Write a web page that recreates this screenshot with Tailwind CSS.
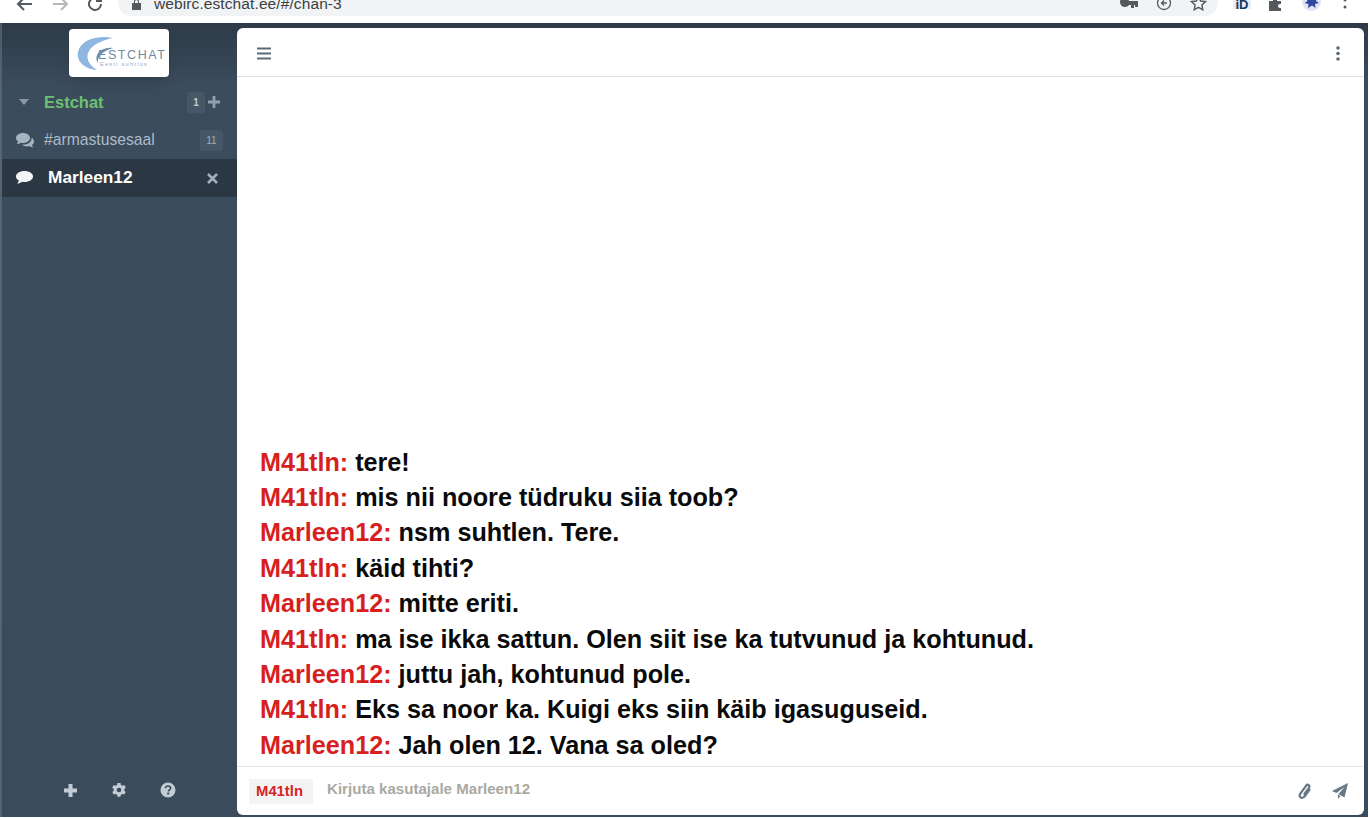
<!DOCTYPE html>
<html lang="et">
<head>
<meta charset="utf-8">
<title>Estchat</title>
<script src="https://cdn.jsdelivr.net/npm/@tailwindcss/browser@4"></script>
</head>
<body class="w-[1370px] h-[820px] overflow-hidden bg-white font-['Liberation_Sans',Arial,sans-serif]">
<div class="flex flex-col h-[820px]">
  <!-- browser chrome -->
  <header class="h-[23px] shrink-0 flex items-start bg-white relative overflow-hidden">
    <div class="flex items-center gap-[17px] pl-[16px] w-[118px] h-[10px] mt-[-1px] text-[#5f6368]">
      <svg class="w-[18px] h-[18px] shrink-0" viewBox="0 0 18 18" fill="none" stroke="#555a5f" stroke-width="2"><path d="M16 9H2M8 3L2 9l6 6"/></svg>
      <svg class="w-[18px] h-[18px] shrink-0" viewBox="0 0 18 18" fill="none" stroke="#b5b8bb" stroke-width="2"><path d="M2 9h14M10 3l6 6-6 6"/></svg>
      <svg class="w-[18px] h-[18px] shrink-0" viewBox="0 0 18 18" fill="none" stroke="#555a5f" stroke-width="2"><path d="M15 9a6 6 0 1 1-2-4.500L15 6M15 1v5h-5"/></svg>
    </div>
    <div class="w-[1100px] h-[17px] mt-[-1px] bg-[#f1f3f4] rounded-br-[14px] rounded-bl-[14px] flex items-end pl-[13px] relative">
      <svg class="w-[11px] h-[11px] mb-[6px]" viewBox="0 0 11 11" fill="#55595d"><path d="M1 4h9v7H1zM3 4V2.500a2.500 2.500 0 0 1 5 0V4H7V2.500a1.500 1.500 0 0 0-3 0V4z"/></svg>
      <span class="ml-[12px] text-[15.500px] leading-[17px] mb-[4px] text-[#3c4043] tracking-[0.100px]">webirc.estchat.ee/#/chan-3</span>
      <div class="absolute right-[11px] top-[-4px] flex items-center gap-[18px]">
        <svg class="w-[18px] h-[14px]" viewBox="0 0 18 14" fill="#55595d"><path d="M5 1a5 5 0 1 0 4 8h2v3h3V9h1v2h3V5H9a5 5 0 0 0-4-4z"/></svg>
        <svg class="w-[16px] h-[16px]" viewBox="0 0 16 16" fill="none" stroke="#55595d" stroke-width="1.300"><circle cx="8" cy="8" r="6.500"/><path d="M11 8H5.500M8 5.500L5.500 8 8 10.500"/></svg>
        <svg class="w-[17px] h-[16px]" viewBox="0 0 17 16" fill="none" stroke="#55595d" stroke-width="1.400"><path d="M8.500 1.500l2.100 4.500 4.900.6-3.600 3.400.9 4.800-4.300-2.400-4.300 2.400.9-4.800L1.500 6.600l4.900-.6z"/></svg>
      </div>
    </div>
    <div class="absolute left-[1233px] top-0 w-[18px] h-[9px] bg-[#e8eef6] text-[#17345f] text-[13px] leading-[9px] font-bold text-center">iD</div>
    <svg class="absolute left-[1268px] top-[-4px] w-[16px] h-[15px]" viewBox="0 0 16 15" fill="#55595d"><path d="M1 5h4V3a2 2 0 0 1 4 0v2h4v3h-1a2 2 0 0 0 0 4h1v3H1z"/></svg>
    <svg class="absolute left-[1302px] top-[-8px] w-[19px] h-[19px]" viewBox="0 0 19 19"><circle cx="9.500" cy="9.500" r="9.500" fill="#dfe5f3"/><path d="M9.500 2l2 4 4-1-1.500 4 3 2-4 1 .5 4-3.500-2.500L6 16l.5-4-4-1 3-2L4 5l4 1z" fill="#2f47a0"/></svg>
    <svg class="absolute left-[1343px] top-[-2px] w-[4px] h-[13px]" viewBox="0 0 4 13" fill="#55595d"><circle cx="2" cy="2" r="1.500"/><circle cx="2" cy="9" r="1.500"/></svg>
  </header>

  <!-- app -->
  <div class="w-[1368px] h-[794px] flex border-l-2 border-[#7c8a96]/40 bg-gradient-to-b from-[#2e3a47] via-[#3b4c5d] via-[8%] to-[#3a4b5c]">
    <aside class="w-[235px] shrink-0 flex flex-col text-[#aebbc7] pb-[2px]">
      <div class="h-[60px] pt-[6px] flex justify-center shrink-0">
        <div class="w-[100px] h-[48px] ml-[-1px] bg-white rounded-[4px] relative overflow-hidden shadow-lg">
          <svg class="absolute left-[8px] top-[8px] w-[36px] h-[33px]" viewBox="0 0 36 33"><path d="M36 1C22-2 4 2 1 15c-2 10 7 17 19 18-8-5-12-12-8-19C16 7 26 3 36 1z" fill="#8fb5e0"/><path d="M36 11c-7-1-14 2-16 7-1 3-1 5 1 8-1-7 5-12 15-15z" fill="#6b8fb5"/></svg>
          <span class="absolute left-[29px] top-[20px] text-[12.500px] leading-[13px] tracking-[1.600px] text-[#7688a0]">ESTCHAT</span>
          <span class="absolute left-[31px] top-[32px] text-[5.500px] leading-[7px] tracking-[1.300px] text-[#8fa8c4]">Eesti suhtlus</span>
        </div>
      </div>
      <div class="h-[38px] flex items-center shrink-0">
        <svg class="ml-[16px] w-[12px] h-[8px]" viewBox="0 0 12 8" fill="#8b98a5"><path d="M1 1h10L6 7z"/></svg>
        <span class="ml-[14px] text-[16.500px] font-bold text-[#6cc070]">Estchat</span>
        <span class="ml-auto w-[18px] h-[21px] rounded-[3px] bg-[#465767] text-white/70 text-[10px] font-bold flex items-center justify-center">1</span>
        <svg class="ml-[3px] mr-[17px] w-[12px] h-[12px]" viewBox="0 0 13 13" fill="#92a0ad"><path d="M5 0h3v5h5v3H8v5H5V8H0V5h5z"/></svg>
      </div>
      <div class="h-[38px] flex items-center shrink-0">
        <svg class="ml-[14px] w-[18px] h-[15px]" viewBox="0 0 18 15" fill="#a7b4c0"><path d="M7 0c3.900 0 7 2.200 7 5s-3.100 5-7 5c-.8 0-1.500-.1-2.200-.3C3.600 10.500 2.200 11 .8 11c.7-.7 1.200-1.600 1.300-2.400C.8 7.700 0 6.400 0 5c0-2.800 3.100-5 7-5z"/><path d="M15.500 4.500C17 5.500 18 7 18 8.500c0 1.400-.7 2.600-2 3.500.1.800.6 1.700 1.300 2.400-1.400 0-2.800-.5-4-1.300-.7.200-1.500.3-2.300.3-2 0-3.800-.7-5-1.700 5 .3 10.500-2.300 9.500-7.700z"/></svg>
        <span class="ml-[10px] text-[15.700px] text-[#aebbc7]">#armastusesaal</span>
        <span class="ml-auto mr-[14px] w-[23px] h-[21px] rounded-[3px] bg-[#465767] text-white/50 text-[10px] flex items-center justify-center">11</span>
      </div>
      <div class="h-[38px] flex items-center shrink-0 bg-[#2b3843]">
        <svg class="ml-[14px] w-[17px] h-[14px]" viewBox="0 0 17 14" fill="#f2f4f6"><path d="M8.500 0C13.200 0 17 2.400 17 5.500S13.200 11 8.500 11c-.9 0-1.700-.1-2.500-.3C4.600 11.800 2.900 12.500 1.200 12.500c.9-.9 1.500-2 1.700-3C1.100 8.500 0 7.100 0 5.500 0 2.400 3.800 0 8.500 0z"/></svg>
        <span class="ml-[15px] text-[17.300px] font-bold text-white">Marleen12</span>
        <svg class="ml-auto mr-[19px] w-[11px] h-[11px]" viewBox="0 0 11 11" stroke="#a3afba" stroke-width="2.600"><path d="M1 1l9 9M10 1l-9 9"/></svg>
      </div>
      <div class="mt-auto h-[50px] flex items-center pl-[61px] gap-[33px] shrink-0">
        <svg class="w-[15px] h-[15px]" viewBox="0 0 15 15" fill="#c3ccd4"><path d="M5.500 1h4v4.500H14v4H9.500V14h-4V9.500H1v-4h4.500z"/></svg>
        <svg class="w-[16px] h-[16px]" viewBox="0 0 16 16" fill="#c3ccd4"><path fill-rule="evenodd" d="M6.500 1h3l.4 2 1.500.8 1.900-.7 1.500 2.600-1.500 1.300v1.700l1.500 1.300-1.500 2.600-1.900-.7-1.500.8-.4 2h-3l-.4-2-1.500-.8-1.900.7L1.200 10l1.500-1.300V7L1.200 5.700l1.500-2.600 1.900.7 1.500-.8zM8 5.700a2.300 2.300 0 1 0 0 4.600 2.300 2.300 0 0 0 0-4.600z"/></svg>
        <svg class="w-[16px] h-[16px]" viewBox="0 0 16 16"><circle cx="8" cy="8" r="7.500" fill="#c3ccd4"/><path d="M5.500 6.200C5.600 4.800 6.600 4 8 4s2.600.8 2.600 2.100c0 1.800-2.100 1.800-2.100 3.300" fill="none" stroke="#3a4b5c" stroke-width="1.700"/><rect x="7.200" y="10.500" width="2" height="2" fill="#3a4b5c"/></svg>
      </div>
    </aside>

    <main class="w-[1127px] mt-[5px] h-[787px] bg-white rounded-[6px] flex flex-col overflow-hidden">
      <div class="h-[49px] shrink-0 flex items-center justify-between border-b border-[#dde0e3] pt-[2px] pl-[20px] pr-[24px]">
        <svg class="w-[14px] h-[13px]" viewBox="0 0 14 13" fill="#5c6b79"><rect y="0.500" width="14" height="2"/><rect y="5.500" width="14" height="2"/><rect y="10.500" width="14" height="2"/></svg>
        <svg class="w-[4px] h-[15px]" viewBox="0 0 4 15" fill="#5c6b79"><circle cx="2" cy="2" r="1.800"/><circle cx="2" cy="7.500" r="1.800"/><circle cx="2" cy="13" r="1.800"/></svg>
      </div>
      <div class="flex-1 flex flex-col justify-end pl-[23px] pb-[3px] text-[25.200px] leading-[35.375px] font-bold text-[#0a0a0a]">
        <p><span class="text-[#d81f1f]">M41tln:</span> tere!</p>
        <p><span class="text-[#d81f1f]">M41tln:</span> mis nii noore tüdruku siia toob?</p>
        <p><span class="text-[#d81f1f]">Marleen12:</span> nsm suhtlen. Tere.</p>
        <p><span class="text-[#d81f1f]">M41tln:</span> käid tihti?</p>
        <p><span class="text-[#d81f1f]">Marleen12:</span> mitte eriti.</p>
        <p><span class="text-[#d81f1f]">M41tln:</span> ma ise ikka sattun. Olen siit ise ka tutvunud ja kohtunud.</p>
        <p><span class="text-[#d81f1f]">Marleen12:</span> juttu jah, kohtunud pole.</p>
        <p><span class="text-[#d81f1f]">M41tln:</span> Eks sa noor ka. Kuigi eks siin käib igasuguseid.</p>
        <p><span class="text-[#d81f1f]">Marleen12:</span> Jah olen 12. Vana sa oled?</p>
      </div>
      <div class="h-[49px] shrink-0 flex items-center border-t border-[#e4e6e8] pl-[12px] pr-[16px]">
        <span class="w-[64px] h-[25px] pr-[3px] bg-[#f4f4f5] text-[#d81f1f] text-[14.800px] font-bold flex items-center justify-center">M41tln</span>
        <span class="ml-[14px] text-[15.100px] font-bold text-[#a9a9a2] mb-[3px]">Kirjuta kasutajale Marleen12</span>
        <svg class="ml-auto w-[14px] h-[16px]" viewBox="0 0 14 16" fill="none" stroke="#667786" stroke-width="2.200"><path d="M12 6l-5.500 7.500c-1.200 1.500-3 1.600-4 .8s-1.100-2.500 0-4l5.500-7.500c.8-1 2-1.200 2.800-.6s.9 1.800.1 2.800l-5 6.700"/></svg>
        <svg class="ml-[20px] w-[16px] h-[16px]" viewBox="0 0 16 16" fill="#667786"><path d="M16 0L0 8l4.500 2L13 3.500 6.500 11l6 3.500zM6 11.500V16l2.500-3z"/></svg>
      </div>
    </main>
  </div>
</div>
</body>
</html>
